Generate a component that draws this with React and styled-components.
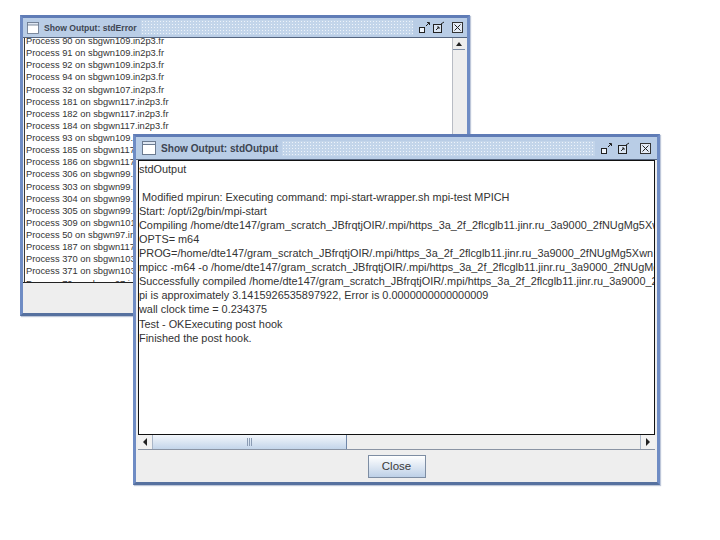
import React from "react";
import styled, { createGlobalStyle } from "styled-components";

const frameColor = "#6f8cc4";
const stripColor = "#b9cde6";

const GlobalStyle = createGlobalStyle`
  html, body {
    margin: 0;
    padding: 0;
    background: #ffffff;
  }
`;

const Desktop = styled.div`
  position: relative;
  width: 720px;
  height: 540px;
  overflow: hidden;
  background: #ffffff;
  font-family: "Liberation Sans", Arial, sans-serif;
`;

const Frame = styled.div`
  position: absolute;
  left: ${(p) => p.$x}px;
  top: ${(p) => p.$y}px;
  width: ${(p) => p.$w}px;
  height: ${(p) => p.$h}px;
  box-sizing: border-box;
  display: flex;
  flex-direction: column;
  background: #eeeeee;
  border: 3px solid ${frameColor};
  border-top-color: #5f7cb6;
  border-bottom-color: #56719f;
  box-shadow: 1px 1px 1px rgba(110, 130, 170, 0.45);
`;

const TitleBar = styled.div`
  flex: none;
  height: ${(p) => p.$h}px;
  display: flex;
  align-items: center;
  padding: 0 ${(p) => p.$right}px 0 ${(p) => p.$left}px;
  background: ${stripColor};
  border-bottom: 1px solid #55657f;
`;

const WindowIcon = styled.svg`
  flex: none;
  width: ${(p) => p.$size}px;
  height: ${(p) => p.$size}px;
  margin-right: ${(p) => p.$gap}px;
`;

const Title = styled.span`
  flex: none;
  font-size: ${(p) => p.$size}px;
  font-weight: bold;
  color: #3d4552;
  margin-right: 4px;
`;

const Bumps = styled.div`
  flex: 1;
  height: 15px;
  background-color: #c3d5ea;
  background-image: radial-gradient(circle, #edf3fa 0.7px, transparent 0.9px);
  background-size: 3px 3px;
`;

const TitleButtons = styled.div`
  flex: none;
  display: flex;
  align-items: center;
  margin-left: 5px;
`;

const TitleButton = styled.svg`
  display: block;
  width: 13px;
  height: 13px;
  margin-left: ${(p) => p.$gap}px;
`;

const Body = styled.div`
  flex: 1;
  min-height: 0;
  display: flex;
`;

const TextPane = styled.div`
  flex: 1;
  min-width: 0;
  overflow: hidden;
  background: #ffffff;
  white-space: pre;
  color: #333333;
  box-sizing: border-box;
`;

const ProcessPane = styled(TextPane)`
  margin-left: 1px;
  border-left: 1px solid #3a3a3a;
  padding-left: 1px;
  font-size: 9.3px;
  line-height: 12.12px;
`;

const ProcessList = styled.div`
  margin-top: -3px;
`;

const OutputPane = styled(TextPane)`
  flex: none;
  height: 275px;
  border: 1px solid #111111;
  padding: 1px 0 0 0;
  font-size: 10.9px;
  line-height: 14.05px;
`;

const VerticalBar = styled.div`
  flex: none;
  width: 12px;
  margin-right: 2px;
  background: #eeeeee;
  border-left: 1px solid #b8bcc4;
`;

const ArrowBox = styled.div`
  height: 11px;
  display: flex;
  align-items: center;
  justify-content: center;
  border-bottom: 1px solid #7f8fa8;
`;

const ArrowUp = styled.span`
  width: 0;
  height: 0;
  border-left: 3px solid transparent;
  border-right: 3px solid transparent;
  border-bottom: 4px solid #222222;
`;

const HorizontalBar = styled.div`
  flex: none;
  height: 15px;
  display: flex;
  background: #eeeeee;
  border-bottom: 1px solid #8a94a4;
  box-sizing: border-box;
`;

const SideButton = styled.div`
  flex: none;
  width: 14px;
  display: flex;
  align-items: center;
  justify-content: center;
  background: #f1f1f1;
  border-${(p) => (p.$left ? "right" : "left")}: 1px solid #a9b6c8;
`;

const ArrowSide = styled.span`
  width: 0;
  height: 0;
  border-top: 4px solid transparent;
  border-bottom: 4px solid transparent;
  border-${(p) => (p.$left ? "right" : "left")}: 4px solid #222222;
`;

const Thumb = styled.div`
  flex: none;
  width: 194px;
  display: flex;
  align-items: center;
  justify-content: center;
  box-sizing: border-box;
  border-right: 1px solid #6f86a8;
  background: linear-gradient(#f2f6fb, #c3d5ea);
`;

const Grip = styled.span`
  width: 5px;
  height: 8px;
  background: repeating-linear-gradient(90deg, #8b9cb4 0 1px, transparent 1px 2px);
`;

const Track = styled.div`
  flex: 1;
`;

const Footer = styled.div`
  flex: 1;
  display: flex;
  align-items: center;
  justify-content: center;
  background: #eeeeee;
`;

const CloseButton = styled.button`
  width: 58px;
  height: 23px;
  padding: 0;
  border: 1px solid #7d8da3;
  background: linear-gradient(#ffffff, #bdd0e7);
  color: #3a3a3a;
  font-family: "Liberation Sans", Arial, sans-serif;
  font-size: 11.5px;
  font-weight: normal;
`;

const Spacer = styled.div`
  flex: none;
  height: 31px;
  background: #eeeeee;
  border-top: 1px solid #222222;
  box-sizing: border-box;
`;

const Column = styled.div`
  flex: 1;
  min-height: 0;
  min-width: 0;
  display: flex;
  flex-direction: column;
`;

const InsetColumn = styled(Column)`
  padding: 0 2px 0 2px;
`;

const AppIcon = ({ size, gap }) => (
  <WindowIcon $size={size} $gap={gap} viewBox="0 0 14 14">
    <rect x="0.5" y="0.5" width="13" height="13" fill="#ffffff" stroke="#6b7a90" />
    <rect x="0.5" y="0.5" width="13" height="3" fill="#dfe7f2" stroke="#6b7a90" />
  </WindowIcon>
);

const Iconify = ({ gap }) => (
  <TitleButton $gap={gap} viewBox="0 0 13 13">
    <rect x="1.5" y="6.5" width="5" height="5" fill="#eef3fa" stroke="#222" />
    <path d="M8 5 L11 2 M9 1.5 h2.5 v2.5" fill="none" stroke="#222" />
  </TitleButton>
);

const Maximize = ({ gap }) => (
  <TitleButton $gap={gap} viewBox="0 0 13 13">
    <rect x="1.5" y="3.5" width="8" height="8" fill="#d9e4f2" stroke="#222" />
    <path d="M4 9 L7 6 M5 6 h2 v2 M9 3 L12 1" fill="none" stroke="#222" />
  </TitleButton>
);

const CloseIcon = ({ gap }) => (
  <TitleButton $gap={gap} viewBox="0 0 13 13">
    <rect x="1.5" y="1.5" width="10" height="10" fill="#e4ebf5" stroke="#333" />
    <path d="M3.5 3.5 L9.5 9.5 M9.5 3.5 L3.5 9.5" stroke="#222" />
  </TitleButton>
);

const processes = [
  "Process 90 on sbgwn109.in2p3.fr",
  "Process 91 on sbgwn109.in2p3.fr",
  "Process 92 on sbgwn109.in2p3.fr",
  "Process 94 on sbgwn109.in2p3.fr",
  "Process 32 on sbgwn107.in2p3.fr",
  "Process 181 on sbgwn117.in2p3.fr",
  "Process 182 on sbgwn117.in2p3.fr",
  "Process 184 on sbgwn117.in2p3.fr",
  "Process 93 on sbgwn109.in2p3.fr",
  "Process 185 on sbgwn117.in2p3.fr",
  "Process 186 on sbgwn117.in2p3.fr",
  "Process 306 on sbgwn99.in2p3.fr",
  "Process 303 on sbgwn99.in2p3.fr",
  "Process 304 on sbgwn99.in2p3.fr",
  "Process 305 on sbgwn99.in2p3.fr",
  "Process 309 on sbgwn101.in2p3.fr",
  "Process 50 on sbgwn97.in2p3.fr",
  "Process 187 on sbgwn117.in2p3.fr",
  "Process 370 on sbgwn103.in2p3.fr",
  "Process 371 on sbgwn103.in2p3.fr",
  "Process 70 on sbgwn97.in2p3.fr",
];

const scratch = "/home/dte147/gram_scratch_JBfrqtjOIR/.mpi/https_3a_2f_2flcglb11.jinr.ru_3a9000_2fNUgMg5Xwn";

const outputLines = [
  "stdOutput",
  "",
  " Modified mpirun: Executing command: mpi-start-wrapper.sh mpi-test MPICH",
  "Start: /opt/i2g/bin/mpi-start",
  `Compiling ${scratch}`,
  "OPTS= m64",
  `PROG=${scratch}`,
  `mpicc -m64 -o ${scratch}`,
  `Successfully compiled ${scratch}`,
  "pi is approximately 3.1415926535897922, Error is 0.0000000000000009",
  "wall clock time = 0.234375",
  "Test - OKExecuting post hook",
  "Finished the post hook.",
];

const App = () => {
  return (
    <Desktop>
      <GlobalStyle />

      <Frame $x={20} $y={15} $w={450} $h={301}>
        <TitleBar $h={19} $left={4} $right={3}>
          <AppIcon size={12} gap={5} />
          <Title $size={8.6}>Show Output: stdError</Title>
          <Bumps />
          <TitleButtons>
            <Iconify gap={0} />
            <Maximize gap={1} />
            <CloseIcon gap={6} />
          </TitleButtons>
        </TitleBar>
        <Column>
          <Body>
            <ProcessPane>
              <ProcessList>{processes.join("\n")}</ProcessList>
            </ProcessPane>
            <VerticalBar>
              <ArrowBox>
                <ArrowUp />
              </ArrowBox>
            </VerticalBar>
          </Body>
          <Spacer />
        </Column>
      </Frame>

      <Frame $x={133} $y={134} $w={527} $h={351}>
        <TitleBar $h={22} $left={6} $right={5}>
          <AppIcon size={14} gap={5} />
          <Title $size={10.1}>Show Output: stdOutput</Title>
          <Bumps />
          <TitleButtons>
            <Iconify gap={0} />
            <Maximize gap={4} />
            <CloseIcon gap={9} />
          </TitleButtons>
        </TitleBar>
        <InsetColumn>
          <OutputPane>{outputLines.join("\n")}</OutputPane>
          <HorizontalBar>
            <SideButton $left>
              <ArrowSide $left />
            </SideButton>
            <Thumb>
              <Grip />
            </Thumb>
            <Track />
            <SideButton>
              <ArrowSide />
            </SideButton>
          </HorizontalBar>
          <Footer>
            <CloseButton>Close</CloseButton>
          </Footer>
        </InsetColumn>
      </Frame>
    </Desktop>
  );
};

export default App;
